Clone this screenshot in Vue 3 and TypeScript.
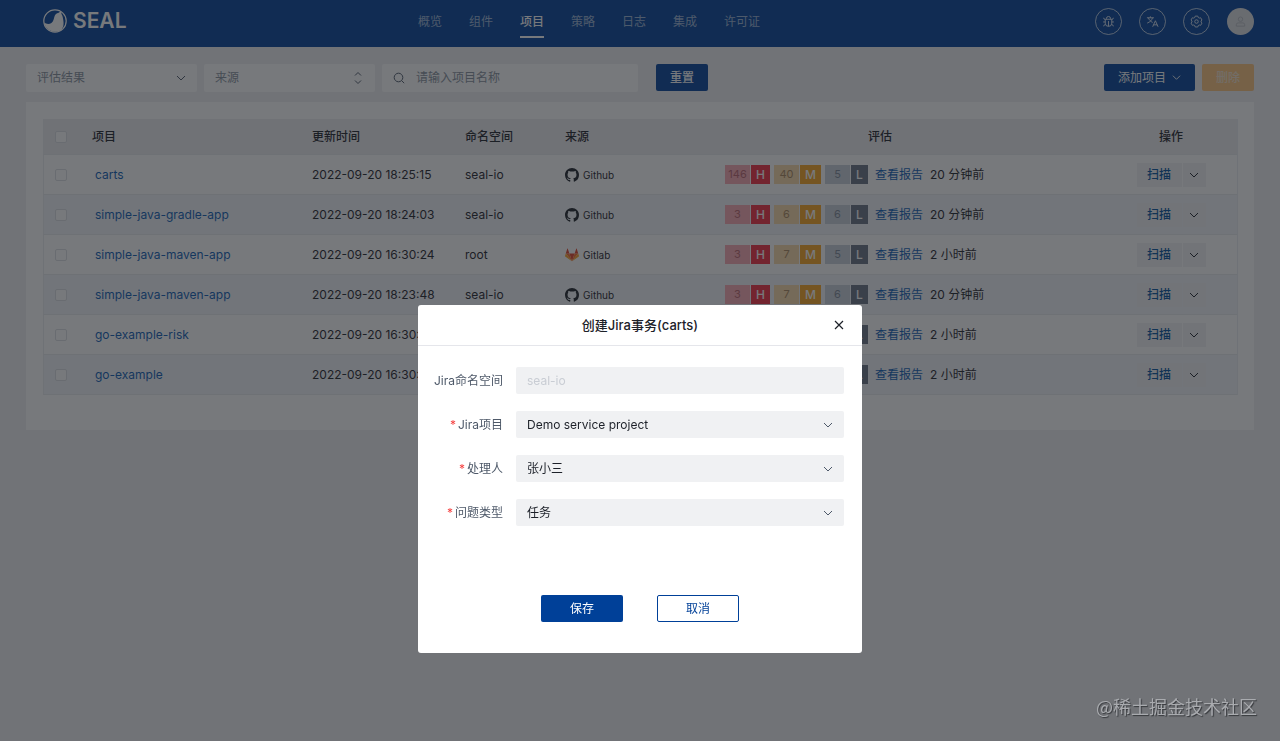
<script setup lang="ts">
import { ref } from 'vue'

interface Project {
  id: number
  name: string
  updated: string
  namespace: string
  source: 'Github' | 'Gitlab'
  high: number
  medium: number
  low: number
  scanned: string
}

const navItems = ['概览', '组件', '项目', '策略', '日志', '集成', '许可证']
const activeNav = '项目'

const projects: Project[] = [
  { id: 1, name: 'carts', updated: '2022-09-20 18:25:15', namespace: 'seal-io', source: 'Github', high: 146, medium: 40, low: 5, scanned: '20 分钟前' },
  { id: 2, name: 'simple-java-gradle-app', updated: '2022-09-20 18:24:03', namespace: 'seal-io', source: 'Github', high: 3, medium: 6, low: 6, scanned: '20 分钟前' },
  { id: 3, name: 'simple-java-maven-app', updated: '2022-09-20 16:30:24', namespace: 'root', source: 'Gitlab', high: 3, medium: 7, low: 5, scanned: '2 小时前' },
  { id: 4, name: 'simple-java-maven-app', updated: '2022-09-20 18:23:48', namespace: 'seal-io', source: 'Github', high: 3, medium: 7, low: 6, scanned: '20 分钟前' },
  { id: 5, name: 'go-example-risk', updated: '2022-09-20 16:30:24', namespace: 'seal-io', source: 'Github', high: 3, medium: 7, low: 6, scanned: '2 小时前' },
  { id: 6, name: 'go-example', updated: '2022-09-20 16:30:24', namespace: 'seal-io', source: 'Github', high: 3, medium: 7, low: 6, scanned: '2 小时前' },
]

const result = ref('')
const source = ref('')
const keyword = ref('')
const modalOpen = ref(true)
const jiraNamespace = ref('seal-io')
const jiraProject = ref('Demo service project')
const assignee = ref('张小三')
const issueType = ref('任务')
</script>

<template>
  <div class="page">
    <header class="topbar">
      <a class="brand" href="#">
        <svg class="brand-mark" viewBox="0 0 24 24" aria-hidden="true">
          <circle cx="12" cy="12" r="11.2" fill="none" stroke="currentColor" stroke-width="1.2" />
          <path fill="currentColor" d="M1 13.600c2.300 1.700 5.400 1.900 7.400.4 2-1.500 2.300-3.900 2.900-6.100.7-2.500 2.300-3.800 4.400-4.200L18 1.900l.5 3.200c1.300 2 1.400 3.700 1.800 6.100.6 3.600.3 6.800-1.900 9.700A11.600 11.600 0 0 1 1 13.600Z" />
        </svg>
        <span>SEAL</span>
      </a>
      <nav class="nav">
        <a v-for="item in navItems" :key="item" href="#" :class="{ active: item === activeNav }">{{ item }}</a>
      </nav>
      <div class="tools">
        <button type="button" class="tool" aria-label="调试">
          <svg viewBox="0 0 14 14"><path d="M4.800 4.500V3.800a2.200 2.200 0 0 1 4.400 0v.7M3.500 4.600h7v4.200a3.500 3.500 0 0 1-7 0zM7 6.500v5.600M1.200 7.500h2.300M10.500 7.500h2.300M1.800 3l.4 1.300 1.300.6M12.200 3l-.4 1.300-1.300.6M1.800 12.200l.4-1.300 1.500-.7M12.200 12.200l-.4-1.300-1.500-.7" /></svg>
        </button>
        <button type="button" class="tool" aria-label="语言">
          <svg viewBox="0 0 14 14"><path d="M1 3h7.500M4.700 1.400V3M7 3C6.300 5.600 4.300 7.600 1.300 8.700M2.600 3c.7 2.300 2.300 4 4.600 5M7.200 12.700l2.900-6.500 2.900 6.500M8.200 10.600h3.800" /></svg>
        </button>
        <button type="button" class="tool" aria-label="设置">
          <svg viewBox="0 0 14 14"><path d="M5.600 1.200h2.800l.5 1.500 1.100.6 1.500-.3 1.400 2.400L11.900 6.500v1.100l1 1.100-1.400 2.400-1.500-.3-1.100.6-.5 1.500H5.600l-.5-1.500-1.100-.6-1.500.3-1.400-2.400 1-1.100V6.500l-1-1.100L2.500 3l1.500.3 1.100-.6z" /><circle cx="7" cy="7.050" r="1.900" /></svg>
        </button>
        <button type="button" class="tool avatar" aria-label="用户">
          <svg viewBox="0 0 14 14"><circle cx="7" cy="4.500" r="2.400" /><path d="M2.500 12V10.500a2 2 0 0 1 2-2h5a2 2 0 0 1 2 2V12z" /></svg>
        </button>
      </div>
    </header>

    <main class="content">
      <form class="filters" @submit.prevent>
        <div class="select-box filter">
          <select v-model="result" aria-label="评估结果">
            <option value="">评估结果</option>
          </select>
          <svg class="chevron" viewBox="0 0 10 10"><path d="M1 3l4 4 4-4" /></svg>
        </div>
        <div class="select-box filter">
          <select v-model="source" aria-label="来源">
            <option value="">来源</option>
          </select>
          <svg class="updown" viewBox="0 0 8 14"><path d="M1 4.500l3-3 3 3M1 9.500l3 3 3-3" /></svg>
        </div>
        <div class="search">
          <svg viewBox="0 0 12 12"><circle cx="5.500" cy="5.500" r="4.300" /><path d="M8.600 8.600l2.600 2.600" /></svg>
          <input v-model="keyword" type="text" placeholder="请输入项目名称" aria-label="项目名称" />
        </div>
        <button type="reset" class="btn primary reset">重置</button>
        <div class="actions">
          <button type="button" class="btn primary add">
            添加项目
            <svg viewBox="0 0 10 10"><path d="M1 3l4 4 4-4" /></svg>
          </button>
          <button type="button" class="btn danger" disabled>删除</button>
        </div>
      </form>

      <section class="card">
        <table>
          <colgroup>
            <col class="c-check" /><col class="c-name" /><col class="c-time" /><col class="c-ns" /><col class="c-source" /><col class="c-eval" /><col class="c-op" />
          </colgroup>
          <thead>
            <tr>
              <th class="check"><input type="checkbox" aria-label="全选" /></th>
              <th>项目</th>
              <th>更新时间</th>
              <th>命名空间</th>
              <th>来源</th>
              <th class="center">评估</th>
              <th class="center">操作</th>
            </tr>
          </thead>
          <tbody>
            <tr v-for="p in projects" :key="p.id">
              <td class="check"><input type="checkbox" :aria-label="p.name" /></td>
              <td class="name"><a href="#">{{ p.name }}</a></td>
              <td>{{ p.updated }}</td>
              <td>{{ p.namespace }}</td>
              <td>
                <span class="source">
                  <svg v-if="p.source === 'Github'" viewBox="0 0 16 16"><path fill="#1d2129" d="M8 0C3.580 0 0 3.580 0 8c0 3.540 2.290 6.530 5.470 7.590.4.070.550-.170.550-.380 0-.190-.010-.820-.010-1.490-2.010.370-2.530-.490-2.690-.940-.090-.230-.480-.940-.820-1.130-.280-.150-.680-.520-.010-.530.630-.010 1.080.580 1.230.820.720 1.210 1.870.870 2.330.660.070-.520.280-.870.510-1.070-1.780-.2-3.640-.890-3.640-3.950 0-.870.310-1.590.820-2.150-.080-.2-.360-1.020.080-2.120 0 0 .670-.210 2.200.820.640-.180 1.320-.270 2-.270s1.360.090 2 .270c1.530-1.040 2.200-.820 2.200-.820.440 1.100.160 1.920.080 2.120.510.560.820 1.270.820 2.150 0 3.070-1.870 3.750-3.650 3.950.290.250.540.730.540 1.480 0 1.070-.010 1.930-.010 2.200 0 .210.150.460.550.380A8.010 8.010 0 0 0 16 8c0-4.420-3.580-8-8-8z" /></svg>
                  <svg v-else viewBox="0 0 16 16">
                    <path fill="#e24329" d="M8 15.200L11 6.200H5z" />
                    <path fill="#fc6d26" d="M8 15.200L5 6.200H.9zM8 15.200l3-9h4.100z" />
                    <path fill="#fca326" d="M.9 6.200L0 9c-.1.300 0 .5.200.7L8 15.200zM15.100 6.200L16 9c.1.300 0 .5-.2.700L8 15.200z" />
                    <path fill="#e24329" d="M.9 6.200H5L3.200.9c-.1-.3-.5-.3-.6 0zM15.100 6.200H11L12.800.9c.1-.3.5-.3.6 0z" />
                  </svg>
                  {{ p.source }}
                </span>
              </td>
              <td>
                <div class="evaluation">
                  <span class="risk high"><b>{{ p.high }}</b><i>H</i></span>
                  <span class="risk medium"><b>{{ p.medium }}</b><i>M</i></span>
                  <span class="risk low"><b>{{ p.low }}</b><i>L</i></span>
                  <a href="#">查看报告</a>
                  <span>{{ p.scanned }}</span>
                </div>
              </td>
              <td>
                <div class="ops">
                  <button type="button" class="scan">扫描</button>
                  <button type="button" class="more" aria-label="更多">
                    <svg viewBox="0 0 10 10"><path d="M1 3l4 4 4-4" /></svg>
                  </button>
                </div>
              </td>
            </tr>
          </tbody>
        </table>
      </section>
    </main>

    <div v-if="modalOpen" class="mask">
      <div class="modal" role="dialog" aria-modal="true" aria-labelledby="modal-title">
        <header class="modal-head">
          <h2 id="modal-title">创建Jira事务(carts)</h2>
          <button type="button" class="close" aria-label="关闭" @click="modalOpen = false">
            <svg viewBox="0 0 10 10"><path d="M1 1l8 8M9 1L1 9" /></svg>
          </button>
        </header>
        <form class="modal-form" @submit.prevent="modalOpen = false">
          <div class="field">
            <label for="jira-ns">Jira命名空间</label>
            <input id="jira-ns" v-model="jiraNamespace" type="text" disabled />
          </div>
          <div class="field">
            <label for="jira-project"><em>*</em>Jira项目</label>
            <div class="select-box">
              <select id="jira-project" v-model="jiraProject"><option>Demo service project</option></select>
              <svg class="chevron" viewBox="0 0 10 10"><path d="M1 3l4 4 4-4" /></svg>
            </div>
          </div>
          <div class="field">
            <label for="jira-assignee"><em>*</em>处理人</label>
            <div class="select-box">
              <select id="jira-assignee" v-model="assignee"><option>张小三</option></select>
              <svg class="chevron" viewBox="0 0 10 10"><path d="M1 3l4 4 4-4" /></svg>
            </div>
          </div>
          <div class="field">
            <label for="jira-type"><em>*</em>问题类型</label>
            <div class="select-box">
              <select id="jira-type" v-model="issueType"><option>任务</option></select>
              <svg class="chevron" viewBox="0 0 10 10"><path d="M1 3l4 4 4-4" /></svg>
            </div>
          </div>
          <div class="modal-foot">
            <button type="submit" class="btn primary">保存</button>
            <button type="button" class="btn outline" @click="modalOpen = false">取消</button>
          </div>
        </form>
      </div>
    </div>

    <div class="watermark">@稀土掘金技术社区</div>
  </div>
</template>

<style>
body {
  background: #f1f1f3;
}
</style>

<style scoped>
.page {
  min-height: 100vh;
  background: #f1f1f3;
  color: #1d2129;
  font-family: Inter, "Noto Sans CJK SC", sans-serif;
  font-size: 12px;
  line-height: 20px;
}
.page *,
.page {
  box-sizing: border-box;
}
button,
input,
select {
  margin: 0;
  font: inherit;
  color: inherit;
}
a {
  color: #0b5bb5;
  text-decoration: none;
}
svg {
  display: block;
  flex: none;
  fill: none;
}
button {
  cursor: pointer;
}

.topbar {
  display: flex;
  align-items: center;
  height: 47px;
  padding: 0 26px 5px 43px;
  background: #004098;
}
.brand {
  display: flex;
  align-items: center;
  gap: 6px;
  flex: 0 0 375px;
  color: #fff;
  font-size: 21px;
  font-weight: 600;
}
.brand-mark {
  width: 24px;
  height: 24px;
}
.nav {
  display: flex;
  gap: 27px;
  white-space: nowrap;
}
.nav a {
  height: 42px;
  line-height: 44px;
  color: rgba(255, 255, 255, 0.6);
}
.nav a.active {
  color: #fff;
  font-weight: 500;
  height: 38px;
  border-bottom: 2px solid #fff;
}
.tools {
  display: flex;
  gap: 17px;
  margin-left: auto;
}
.tool {
  display: grid;
  place-items: center;
  width: 27px;
  height: 27px;
  padding: 0;
  border: 1px solid rgba(255, 255, 255, 0.7);
  border-radius: 50%;
  background: none;
  color: #dbe4f2;
}
.tool svg {
  width: 13px;
  height: 13px;
  stroke: currentColor;
}
.avatar {
  border: 0;
  background: #dcdee2;
  color: #b8bbc0;
}

.content {
  padding: 17px 26px;
}
.filters {
  display: flex;
  gap: 7px;
}
.select-box {
  position: relative;
}
.select-box select {
  width: 100%;
  height: 27px;
  padding: 0 11px;
  border: 0;
  border-radius: 2px;
  background: #f0f1f3;
  appearance: none;
}
.chevron,
.updown {
  position: absolute;
  top: 0;
  bottom: 0;
  right: 11px;
  margin: auto 0;
  pointer-events: none;
  stroke: #4e5969;
}
.chevron {
  width: 10px;
  height: 10px;
}
.updown {
  width: 8px;
  height: 14px;
  right: 13px;
}
.filter {
  flex: 0 1 171px;
}
.filter select {
  height: 28px;
  background: #fff;
  color: #86909c;
}
.search {
  display: flex;
  align-items: center;
  gap: 11px;
  flex: 0 1 256px;
  height: 28px;
  padding: 0 11px;
  border-radius: 2px;
  background: #fff;
}
.search svg {
  width: 12px;
  height: 12px;
  stroke: #4e5969;
}
.search input {
  flex: 1;
  min-width: 0;
  padding: 0;
  border: 0;
  background: none;
}
.search input::placeholder {
  color: #86909c;
}
.btn {
  display: inline-flex;
  align-items: center;
  justify-content: center;
  height: 27px;
  padding: 0 14px;
  border: 0;
  border-radius: 2px;
  font-weight: 500;
  white-space: nowrap;
}
.primary {
  background: #004098;
  color: #fff;
}
.reset {
  margin-left: 11px;
}
.actions {
  display: flex;
  gap: 7px;
  margin-left: auto;
}
.add {
  gap: 6px;
  font-weight: 400;
}
.add svg {
  width: 9px;
  height: 9px;
  stroke: currentColor;
}
.danger {
  background: #fdc27c;
  color: #f3e2cb;
}

.card {
  margin-top: 10px;
  padding: 17px 17px 35px;
  background: #fff;
}
table {
  width: 100%;
  table-layout: fixed;
  border-spacing: 0;
  border-right: 1px solid #eceef2;
}
.c-check { width: 39px; }
.c-name { width: 220px; }
.c-time { width: 153px; }
.c-ns { width: 100px; }
.c-source { width: 100px; }
.c-eval { width: 450px; }
.c-op { width: 132px; }
th,
td {
  padding: 0 10px;
  border-bottom: 1px solid #e8eaed;
  text-align: left;
}
th {
  height: 36px;
  background: #eeeef1;
  font-weight: 500;
}
td {
  height: 40px;
}
th:first-child,
td:first-child {
  border-left: 1px solid #eceef0;
}
tbody tr:nth-child(even) {
  background: #f2f6f9;
}
.center {
  text-align: center;
}
.check {
  padding: 0 0 0 11px;
}
.check input {
  display: block;
  width: 12px;
  height: 12px;
  border: 1px solid #dcdfe3;
  border-radius: 2px;
  background: #fff;
  appearance: none;
}
.name {
  padding-left: 13px;
}
.source {
  display: flex;
  align-items: center;
  gap: 4px;
  font-size: 10px;
}
.source svg {
  width: 14px;
  height: 14px;
}
.evaluation {
  display: flex;
  align-items: center;
  width: 310px;
  margin: 0 auto;
  white-space: nowrap;
}
.evaluation a {
  margin: 0 7px 0 3px;
}
.risk {
  display: flex;
  gap: 1px;
  margin-right: 4px;
  line-height: 19px;
  text-align: center;
}
.risk b {
  width: 25px;
  font-size: 11px;
  font-weight: 400;
}
.risk i {
  width: 19px;
  color: #fff;
  font-style: normal;
  font-weight: 500;
}
.high b { background: #fba9b1; color: #b8606c; }
.high i { background: #f62b40; }
.medium b { background: #fbd9a8; color: #a8865a; }
.medium i { width: 21px; background: #f9a51e; }
.low b { background: #c9d0da; color: #7c8696; }
.low i { width: 17px; background: #667082; }
.ops {
  display: flex;
  justify-content: center;
  gap: 1px;
}
.ops button {
  display: grid;
  place-items: center;
  height: 24px;
  padding: 0;
  border: 0;
  background: #f2f3f5;
}
.ops .scan {
  width: 45px;
  color: #00509f;
  font-weight: 500;
}
.ops .more {
  width: 23px;
  color: #1d2129;
}
.ops svg {
  width: 10px;
  height: 10px;
  stroke: currentColor;
}

.mask {
  position: fixed;
  inset: 0;
  display: flex;
  align-items: flex-start;
  justify-content: center;
  padding-top: 305px;
  background: rgba(28, 31, 37, 0.6);
}
.modal {
  width: 444px;
  max-width: 100%;
  border-radius: 3px;
  background: #fff;
}
.modal-head {
  display: flex;
  align-items: center;
  height: 41px;
  padding: 0 17px 0 29px;
  border-bottom: 1px solid #e5e6eb;
}
.modal-head h2 {
  flex: 1;
  margin: 0;
  font-size: 13px;
  font-weight: 500;
  text-align: center;
}
.close {
  display: grid;
  place-items: center;
  width: 12px;
  height: 20px;
  padding: 0;
  border: 0;
  background: none;
}
.close svg {
  width: 10px;
  height: 10px;
  stroke: #1d2129;
  stroke-width: 1.2;
}
.modal-form {
  display: flex;
  flex-direction: column;
  gap: 17px;
  padding: 21px 18px 31px 0;
}
.field {
  display: grid;
  grid-template-columns: 85px 1fr;
  gap: 13px;
  align-items: center;
  white-space: nowrap;
}
.field label {
  color: #4e5969;
  text-align: right;
}
.field em {
  margin-right: 2px;
  color: #f53f3f;
  font-style: normal;
}
.field input {
  height: 27px;
  min-width: 0;
  padding: 0 11px;
  border: 0;
  border-radius: 2px;
  background: #f0f1f3;
  color: #c9cdd4;
}
.modal-foot {
  display: flex;
  justify-content: center;
  gap: 34px;
  padding: 52px 0 0 18px;
}
.modal-foot .btn {
  width: 82px;
  font-weight: 400;
}
.outline {
  border: 1px solid #004098;
  background: #fff;
  color: #004098;
}
.watermark {
  position: fixed;
  right: 23px;
  bottom: 22px;
  color: #a9abaf;
  font-family: "Noto Sans CJK SC", sans-serif;
  font-size: 18px;
  line-height: 26px;
  text-shadow: 1px 1px 1px #35373b;
}
</style>
